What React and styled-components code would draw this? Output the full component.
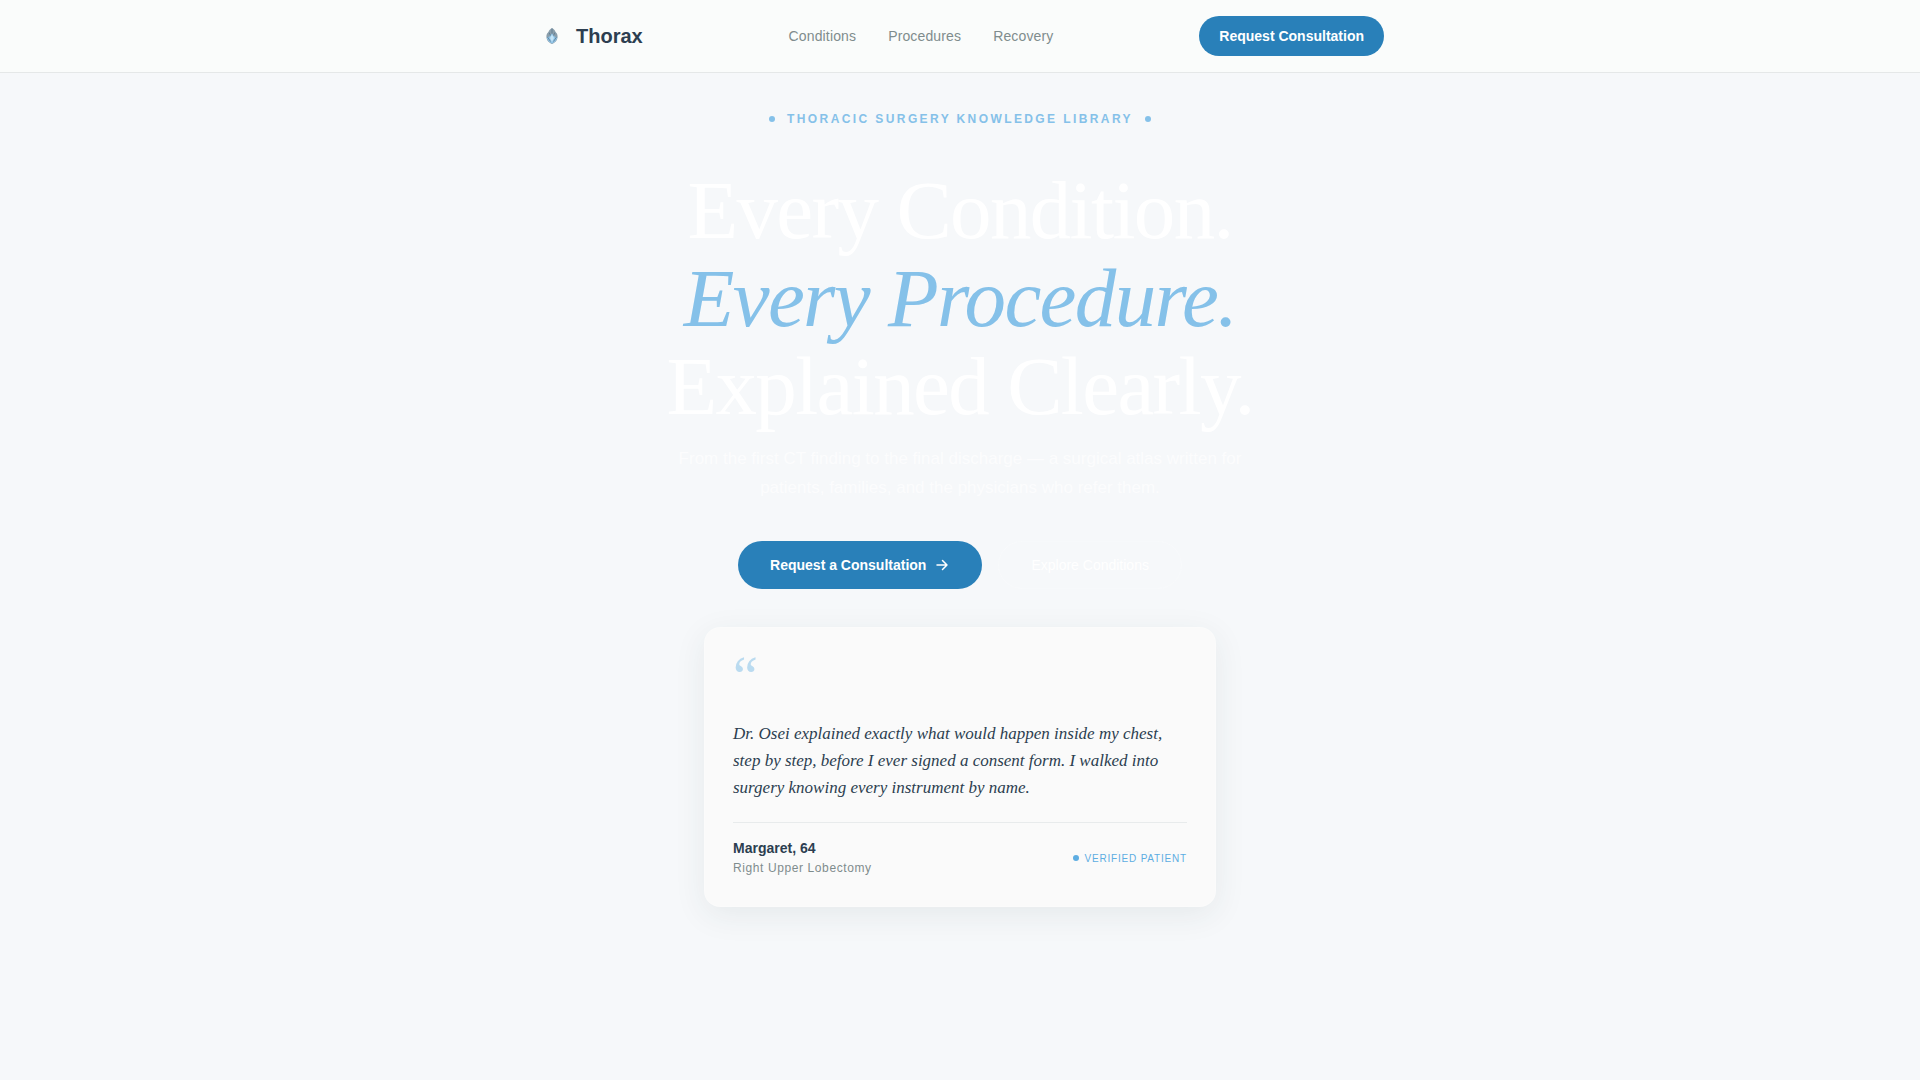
import React from 'react';
import styled, { createGlobalStyle } from 'styled-components';

const COLORS = {
  page: '#f6f8fa',
  header: '#fafcfb',
  card: '#fafafa',
  line: '#e5e8e8',
  navy: '#2c3e50',
  gray: '#7f8c8d',
  blue: '#2980b9',
  sky: '#5dade2',
  light: '#85c1e9',
};

const SANS = '"Liberation Sans", Arial, sans-serif';
const SERIF = '"Liberation Serif", "Times New Roman", serif';

const GlobalStyle = createGlobalStyle`
  *, *::before, *::after {
    box-sizing: border-box;
  }
  body {
    margin: 0;
    background-color: ${COLORS.page};
    color: ${COLORS.navy};
    font-family: ${SANS};
  }
  h1, p, blockquote, figure {
    margin: 0;
  }
`;

const Header = styled.header`
  background-color: ${COLORS.header};
  border-bottom: 1px solid ${COLORS.line};
`;

const HeaderInner = styled.div`
  display: flex;
  justify-content: space-between;
  align-items: center;
  max-width: 896px;
  margin: 0 auto;
  padding: 16px 24px;
`;

const Brand = styled.a`
  display: flex;
  align-items: center;
  gap: 8px;
  color: ${COLORS.navy};
  font-size: 20px;
  font-weight: 700;
  text-decoration: none;
`;

const Nav = styled.nav`
  display: flex;
  gap: 32px;
`;

const NavLink = styled.a`
  color: ${COLORS.gray};
  font-size: 14px;
  letter-spacing: 0.01em;
  text-decoration: none;
`;

const Button = styled.button`
  display: inline-flex;
  align-items: center;
  justify-content: center;
  gap: 8px;
  height: ${({ $large }) => ($large ? 48 : 40)}px;
  padding: 0 ${({ $large }) => ($large ? 32 : 20)}px;
  border: ${({ $ghost }) => ($ghost ? '1px solid rgba(255, 255, 255, 0.2)' : 'none')};
  border-radius: 24px;
  background-color: ${({ $ghost }) => ($ghost ? 'transparent' : COLORS.blue)};
  color: #fff;
  font-family: inherit;
  font-size: 14px;
  font-weight: ${({ $ghost }) => ($ghost ? 400 : 700)};
  cursor: pointer;
`;

const Hero = styled.main`
  display: flex;
  flex-direction: column;
  align-items: center;
  padding: 38px 24px 64px;
  text-align: center;
`;

const Eyebrow = styled.p`
  display: flex;
  align-items: center;
  gap: 12px;
  margin-bottom: 39px;
  color: ${COLORS.light};
  font-size: 12px;
  font-weight: 700;
  line-height: 16px;
  letter-spacing: 0.2em;
  text-transform: uppercase;
`;

const Dot = styled.span`
  flex: none;
  width: 6px;
  height: 6px;
  border-radius: 50%;
  background-color: ${({ $color }) => $color};
`;

const Title = styled.h1`
  margin-bottom: 14px;
  color: #fff;
  font-family: ${SERIF};
  font-size: 83px;
  font-weight: 400;
  line-height: 88px;
  letter-spacing: -0.02em;

  em {
    color: ${COLORS.light};
  }
`;

const Lead = styled.p`
  max-width: 576px;
  margin-bottom: 39px;
  color: rgba(255, 255, 255, 0.7);
  font-size: 17px;
  line-height: 29px;
`;

const Actions = styled.div`
  display: flex;
  gap: 16px;
  margin-bottom: 38px;
`;

const Card = styled.figure`
  width: 100%;
  max-width: 512px;
  padding: 28px;
  border: 1px solid rgba(255, 255, 255, 0.3);
  border-radius: 16px;
  background-color: ${COLORS.card};
  box-shadow: 0 8px 32px rgba(44, 58, 62, 0.08);
  text-align: left;
`;

const QuoteMark = styled.div`
  margin-bottom: 24px;
  color: ${COLORS.sky};
  font-family: ${SERIF};
  font-size: 56px;
  line-height: 40px;
  opacity: 0.4;
`;

const Quote = styled.blockquote`
  margin-bottom: 15px;
  padding-bottom: 21px;
  border-bottom: 1px solid #e8ebec;
  font-family: ${SERIF};
  font-size: 17px;
  font-style: italic;
  line-height: 27px;
`;

const Person = styled.figcaption`
  display: flex;
  justify-content: space-between;
  align-items: center;
`;

const Name = styled.p`
  font-size: 14px;
  font-weight: 700;
  line-height: 20px;
`;

const Operation = styled.p`
  color: ${COLORS.gray};
  font-size: 12px;
  line-height: 20px;
  letter-spacing: 0.05em;
`;

const Verified = styled.span`
  display: flex;
  align-items: center;
  gap: 6px;
  color: ${COLORS.sky};
  font-size: 10px;
  letter-spacing: 0.08em;
  text-transform: uppercase;
`;

const Logo = () => (
  <svg width="32" height="32" viewBox="0 0 32 32" aria-hidden="true">
    <path d="M16 8c-2.200 1.300-3.200 2.600-3.600 4.200-1.400 1-2 2.500-2 4.300 0 3.600 2.400 6.300 5.600 7.500 3.200-1.200 5.600-3.900 5.600-7.500 0-1.800-.6-3.300-2-4.300C19.200 10.600 18.200 9.300 16 8z" fill="#8a9eab" />
    <path d="M10.800 17.500l2.700-1 2.500-3 2.500 3 2.700 1c-.5 2.800-2.500 5-5.200 6.100-2.700-1.100-4.700-3.300-5.200-6.100z" fill="#8fc3e6" />
    <path d="M16 14.500l2 3.500-2 4-2-4z" fill="#c4e4f7" />
    <path d="M16 8.500v5M13 12.500l1.500 3M19 12.500l-1.500 3M11.500 17l3 4.500M20.500 17l-3 4.500" fill="none" stroke="#597a90" strokeWidth="0.8" />
  </svg>
);

const ArrowIcon = () => (
  <svg width="16" height="16" viewBox="0 0 16 16" fill="none" stroke="currentColor" strokeWidth="1.5" strokeLinecap="round" strokeLinejoin="round" aria-hidden="true">
    <path d="M3 8h10M8.500 3.500L13 8l-4.500 4.500" />
  </svg>
);

const LINKS = ['Conditions', 'Procedures', 'Recovery'];

const App = () => {
  return (
    <>
      <GlobalStyle />
      <Header>
        <HeaderInner>
          <Brand href="#">
            <Logo />
            Thorax
          </Brand>
          <Nav>
            {LINKS.map((link) => (
              <NavLink key={link} href={`#${link.toLowerCase()}`}>{link}</NavLink>
            ))}
          </Nav>
          <Button type="button">Request Consultation</Button>
        </HeaderInner>
      </Header>

      <Hero>
        <Eyebrow>
          <Dot $color={COLORS.light} />
          Thoracic Surgery Knowledge Library
          <Dot $color={COLORS.light} />
        </Eyebrow>
        <Title>
          Every Condition.
          <br />
          <em>Every Procedure.</em>
          <br />
          Explained Clearly.
        </Title>
        <Lead>
          From the first CT finding to the final discharge — a surgical atlas written for
          patients, families, and the physicians who refer them.
        </Lead>
        <Actions>
          <Button type="button" $large>
            Request a Consultation
            <ArrowIcon />
          </Button>
          <Button type="button" $large $ghost>Explore Conditions</Button>
        </Actions>

        <Card>
          <QuoteMark aria-hidden="true">“</QuoteMark>
          <Quote>
            Dr. Osei explained exactly what would happen inside my chest, step by step, before I
            ever signed a consent form. I walked into surgery knowing every instrument by name.
          </Quote>
          <Person>
            <div>
              <Name>Margaret, 64</Name>
              <Operation>Right Upper Lobectomy</Operation>
            </div>
            <Verified>
              <Dot $color={COLORS.sky} />
              Verified Patient
            </Verified>
          </Person>
        </Card>
      </Hero>
    </>
  );
};

export default App;
